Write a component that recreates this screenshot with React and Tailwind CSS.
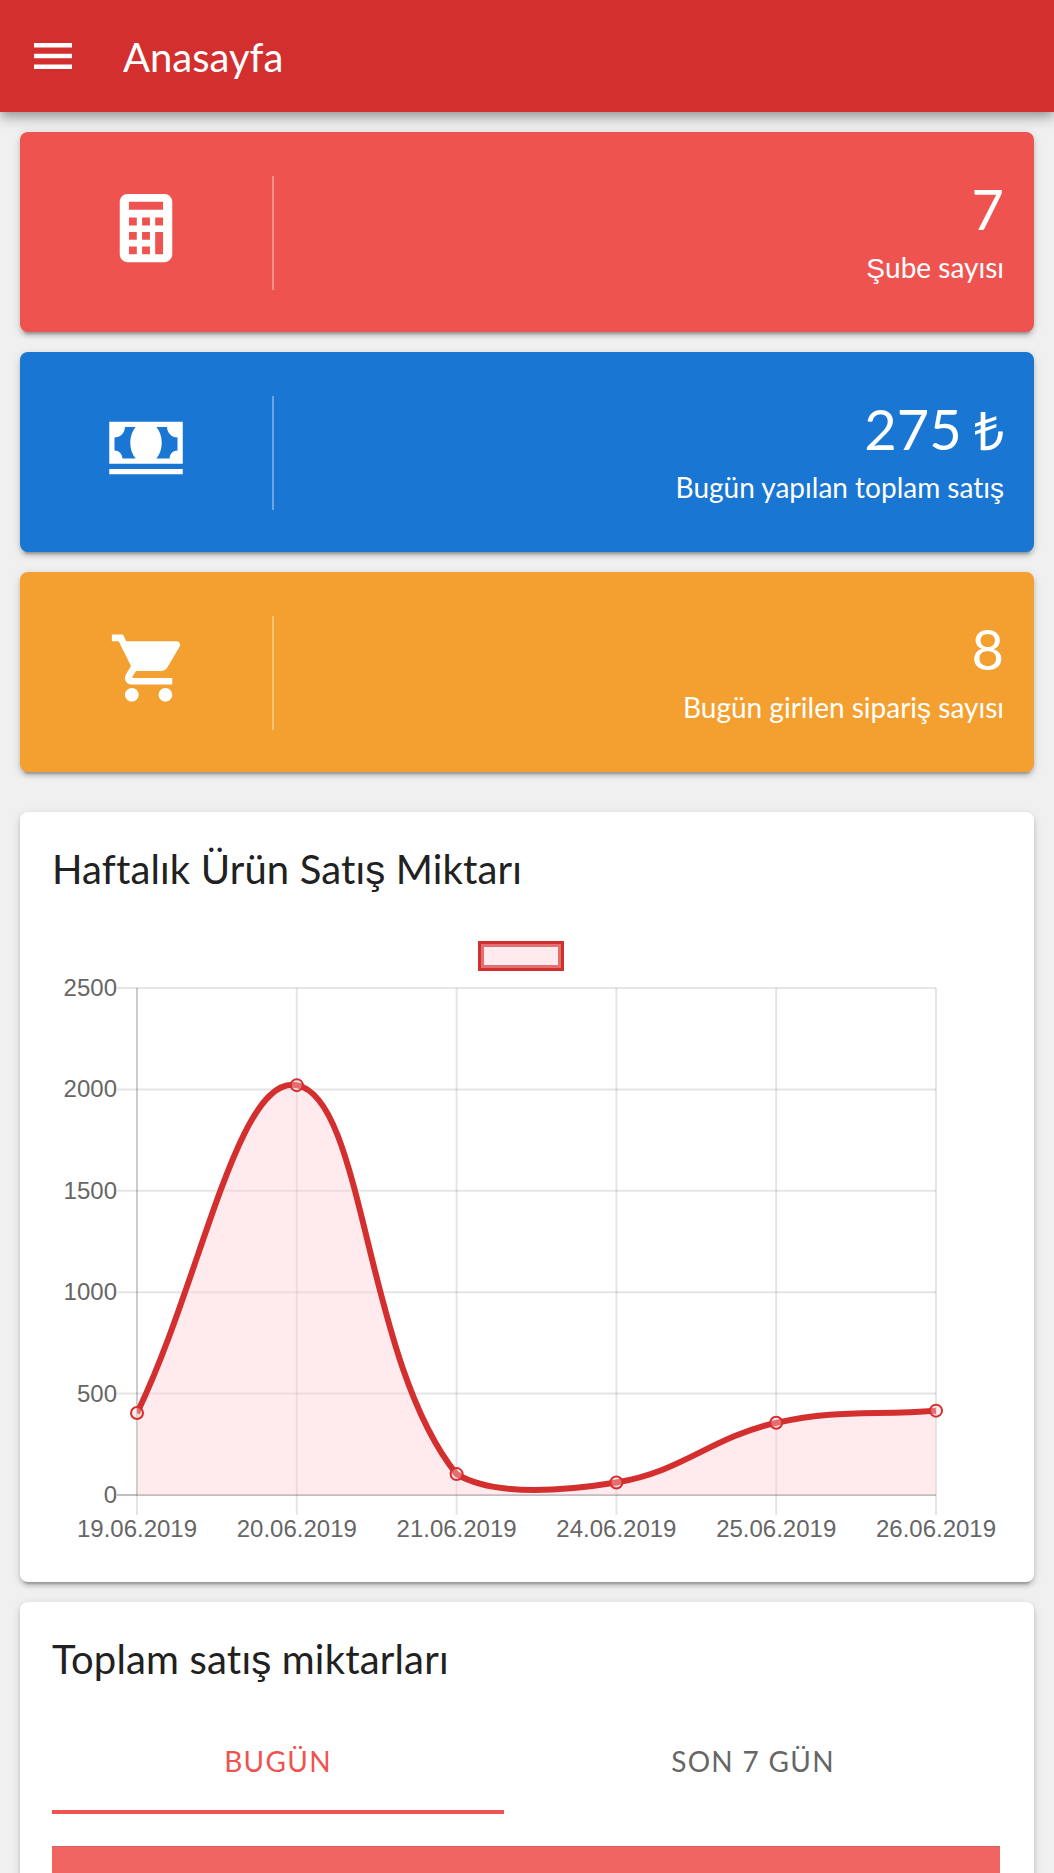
import { IoMdCalculator, IoMdCart, IoMdCash } from 'react-icons/io'

const stats = [
  { icon: IoMdCalculator, value: '7', label: 'Şube sayısı', color: 'bg-[#ef5350]' },
  { icon: IoMdCash, value: '275 ₺', label: 'Bugün yapılan toplam satış', color: 'bg-[#1976d2]' },
  { icon: IoMdCart, value: '8', label: 'Bugün girilen sipariş sayısı', color: 'bg-[#f4a030]' },
]

const sales = [
  { date: '19.06.2019', total: 404 },
  { date: '20.06.2019', total: 2021 },
  { date: '21.06.2019', total: 103 },
  { date: '24.06.2019', total: 62 },
  { date: '25.06.2019', total: 356 },
  { date: '26.06.2019', total: 416 },
]

const cardShadow =
  'shadow-[0_6px_2px_-4px_rgba(0,0,0,0.2),0_4px_4px_0_rgba(0,0,0,0.14),0_2px_10px_0_rgba(0,0,0,0.12)]'

// chart area inside the svg
const area = { left: 85, right: 884, top: 60, bottom: 567 }
const ticks = [0, 500, 1000, 1500, 2000, 2500]

const xAt = (i) => area.left + (i * (area.right - area.left)) / (sales.length - 1)
const yAt = (v) => area.bottom - (v * (area.bottom - area.top)) / 2500

// smooth line with tension 0.4, control points kept inside the chart area
function linePath(points) {
  const clampY = (y) => Math.min(area.bottom, Math.max(area.top, y))
  const cps = points.map((p, i) => {
    const prev = points[i - 1] || p
    const next = points[i + 1] || p
    const d01 = Math.hypot(p.x - prev.x, p.y - prev.y)
    const d12 = Math.hypot(next.x - p.x, next.y - p.y)
    const fa = (0.4 * d01) / (d01 + d12)
    const fb = (0.4 * d12) / (d01 + d12)
    const dx = next.x - prev.x
    const dy = next.y - prev.y
    return {
      inX: p.x - fa * dx,
      inY: clampY(p.y - fa * dy),
      outX: p.x + fb * dx,
      outY: clampY(p.y + fb * dy),
    }
  })
  return points.reduce((d, p, i) => {
    if (i === 0) return `M${p.x} ${p.y}`
    const a = cps[i - 1]
    const b = cps[i]
    return `${d} C${a.outX} ${a.outY} ${b.inX} ${b.inY} ${p.x} ${p.y}`
  }, '')
}

// Ş, ş and ₺ are set in the sans fallback, everything else in Lato
function Txt({ children }) {
  return children.split(/([Şş₺])/).map((part, i) =>
    i % 2 ? (
      <span
        key={i}
        className={`font-['Liberation_Sans',Arial,sans-serif] leading-none ${part === '₺' ? '-ml-0.5 text-[0.95em]' : ''}`}
      >
        {part}
      </span>
    ) : (
      part
    )
  )
}

function StatCard({ icon: Icon, value, label, color }) {
  return (
    <div className={`flex h-[200px] rounded-lg text-white ${color} ${cardShadow}`}>
      <div className="flex w-[252px] items-center justify-center pb-2">
        <Icon className="size-[84px]" />
      </div>
      <div className="mt-[44px] h-[114px] w-0.5 bg-white/35" />
      <div className="flex-1 pt-[43px] pr-[30px] text-right">
        <div className="text-[56px] leading-[67px]"><Txt>{value}</Txt></div>
        <div className="mt-2 text-[28px] leading-[34px]"><Txt>{label}</Txt></div>
      </div>
    </div>
  )
}

function SalesChart() {
  const points = sales.map((s, i) => ({ x: xAt(i), y: yAt(s.total) }))
  const line = linePath(points)

  return (
    <svg
      width="950"
      height="620"
      viewBox="0 0 950 620"
      className="block font-['Liberation_Sans',Arial,sans-serif] text-[24px]"
    >
      <defs>
        <clipPath id="chartArea">
          <rect x={area.left} y={area.top} width={area.right - area.left} height={area.bottom - area.top} />
        </clipPath>
      </defs>

      {/* legend box */}
      <rect x="429" y="16" width="80" height="24" fill="none" stroke="#d32f2f" strokeWidth="6" />
      <rect x="429" y="16" width="80" height="24" fill="#ffcdd2" fillOpacity="0.4" />

      {ticks.map((t) => (
        <g key={t}>
          <path d={`M65 ${yAt(t)}H${area.right}`} stroke="#000" strokeOpacity={t === 0 ? 0.25 : 0.1} strokeWidth="2" />
          <text x="65" y={yAt(t) + 8} textAnchor="end" fill="#666">{t}</text>
        </g>
      ))}
      {sales.map((s, i) => (
        <g key={s.date}>
          {i === 0 ? (
            <>
              <path d={`M${xAt(i)} ${area.top}V${area.bottom}`} stroke="#000" strokeOpacity="0.2" strokeWidth="2" />
              <path d={`M${xAt(i)} ${area.bottom}v20`} stroke="#000" strokeOpacity="0.1" strokeWidth="2" />
            </>
          ) : (
            <path d={`M${xAt(i)} ${area.top}V${area.bottom + 20}`} stroke="#000" strokeOpacity="0.1" strokeWidth="2" />
          )}
          <text x={xAt(i)} y="609" textAnchor="middle" fill="#666">{s.date}</text>
        </g>
      ))}

      <g clipPath="url(#chartArea)">
        <path d={`${line} V${area.bottom} H${area.left} Z`} fill="#ffcdd2" fillOpacity="0.4" />
        <path d={line} fill="none" stroke="#d32f2f" strokeWidth="6" />
      </g>
      {points.map((p) => (
        <g key={p.x}>
          <circle cx={p.x} cy={p.y} r="6" fill="#ffcdd2" fillOpacity="0.4" />
          <circle cx={p.x} cy={p.y} r="6" fill="none" stroke="#d32f2f" strokeWidth="2" />
        </g>
      ))}
    </svg>
  )
}

export default function App() {
  return (
    <div className="h-[1873px] overflow-hidden bg-[#f0f0f0] font-[Lato,'Liberation_Sans',sans-serif] text-[#212121] [font-variant-ligatures:none]">
      <header className="flex h-[112px] items-center bg-[#d32f2f] pl-[34px] text-white shadow-[0_4px_8px_-2px_rgba(0,0,0,0.2),0_8px_10px_0_rgba(0,0,0,0.14),0_2px_20px_0_rgba(0,0,0,0.12)]">
        <svg width="38" height="26" viewBox="0 0 38 26" fill="currentColor">
          <path d="M0 0h38v4.5H0zM0 10.7h38v4.5H0zM0 21.5h38V26H0z" />
        </svg>
        <h1 className="mt-0.5 ml-[51px] text-[40px] leading-[48px]">Anasayfa</h1>
      </header>

      <main className="px-5 pt-5">
        <div className="flex flex-col gap-5">
          {stats.map((s) => (
            <StatCard key={s.label} {...s} />
          ))}
        </div>

        {/* Weekly sales */}
        <section className={`mt-10 h-[770px] rounded-lg bg-white px-8 pt-[33px] ${cardShadow}`}>
          <h2 className="mb-[35px] text-[40px] leading-[48px] tracking-[0.15px]"><Txt>Haftalık Ürün Satış Miktarı</Txt></h2>
          <SalesChart />
        </section>

        {/* Totals */}
        <section className={`mt-5 h-[400px] rounded-lg bg-white px-8 pt-[33px] ${cardShadow}`}>
          <h2 className="text-[40px] leading-[48px] tracking-[0.18px]"><Txt>Toplam satış miktarları</Txt></h2>
          <div className="mt-[31px] flex h-[100px] text-[28px] tracking-[1.3px] text-[#666]">
            <button className="w-[452px] border-b-4 border-[#ef5350] pb-0.5 text-[#ef5350]">BUGÜN</button>
            <button className="flex-1 border-b-4 border-transparent pb-0.5">SON 7 GÜN</button>
          </div>
          <div className="mt-8 mr-0.5 h-[300px] border-t border-[#dc605e] bg-[#ef6361]" />
        </section>
      </main>
    </div>
  )
}
